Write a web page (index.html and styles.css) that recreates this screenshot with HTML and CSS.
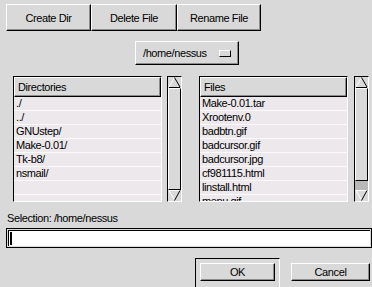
FILE: index.html
```html
<!DOCTYPE html>
<html lang="en">
<head>
  <meta charset="UTF-8" />
  <title>File Browser</title>
  <link rel="stylesheet" href="styles.css">
</head>
<body>
  <div class="toolbar">
    <button class="btn btn-create">Create Dir</button>
    <button class="btn btn-delete">Delete File</button>
    <button class="btn btn-rename">Rename File</button>
  </div>

  <div class="path-row">
    <div class="menubutton">
      <span>/home/nessus</span>
      <span class="indicator"></span>
    </div>
  </div>

  <div class="browser">
    <div class="pane">
      <div class="listbox">
        <div class="list-head">Directories</div>
        <ul>
          <li>./</li>
          <li>../</li>
          <li>GNUstep/</li>
          <li>Make-0.01/</li>
          <li>Tk-b8/</li>
          <li>nsmail/</li>
          <li></li>
          <li></li>
        </ul>
      </div>
      <div class="scroll">
        <svg class="arrow" width="13" height="11" viewBox="0 0 13 11">
          <polygon points="6.5,0.5 12,10 1,10" fill="#d9d9d9"/>
          <line x1="1" y1="10" x2="6.5" y2="0.5" stroke="#fff"/>
          <line x1="6.5" y1="0.5" x2="12" y2="10" stroke="#000"/>
          <line x1="1" y1="10.5" x2="12" y2="10.5" stroke="#000"/>
        </svg>
        <div class="thumb"></div>
        <svg class="arrow" width="13" height="11" viewBox="0 0 13 11">
          <polygon points="1,0.5 12,0.5 6.5,10" fill="#d9d9d9"/>
          <line x1="1" y1="0.5" x2="12" y2="0.5" stroke="#fff"/>
          <line x1="1" y1="0.5" x2="6.5" y2="10" stroke="#fff"/>
          <line x1="12" y1="0.5" x2="6.5" y2="10.5" stroke="#000"/>
        </svg>
      </div>
    </div>

    <div class="pane">
      <div class="listbox">
        <div class="list-head">Files</div>
        <ul>
          <li>Make-0.01.tar</li>
          <li>Xrootenv.0</li>
          <li>badbtn.gif</li>
          <li>badcursor.gif</li>
          <li>badcursor.jpg</li>
          <li>cf981115.html</li>
          <li>linstall.html</li>
          <li>menu.gif</li>
        </ul>
      </div>
      <div class="scroll">
        <svg class="arrow" width="13" height="11" viewBox="0 0 13 11">
          <polygon points="6.5,0.5 12,10 1,10" fill="#d9d9d9"/>
          <line x1="1" y1="10" x2="6.5" y2="0.5" stroke="#fff"/>
          <line x1="6.5" y1="0.5" x2="12" y2="10" stroke="#000"/>
          <line x1="1" y1="10.5" x2="12" y2="10.5" stroke="#000"/>
        </svg>
        <div class="thumb thumb-partial"></div>
        <svg class="arrow" width="13" height="11" viewBox="0 0 13 11">
          <polygon points="1,0.5 12,0.5 6.5,10" fill="#d9d9d9"/>
          <line x1="1" y1="0.5" x2="12" y2="0.5" stroke="#fff"/>
          <line x1="1" y1="0.5" x2="6.5" y2="10" stroke="#fff"/>
          <line x1="12" y1="0.5" x2="6.5" y2="10.5" stroke="#000"/>
        </svg>
      </div>
    </div>
  </div>

  <div class="selection">Selection: /home/nessus</div>
  <div class="entry"><span class="cursor"></span></div>

  <div class="actions">
    <div class="default-ring">
      <button class="btn btn-ok">OK</button>
    </div>
    <button class="btn btn-cancel">Cancel</button>
  </div>
</body>
</html>
```

FILE: styles.css
```css
* {
  box-sizing: border-box;
}

body {
  margin: 0;
  width: 372px;
  height: 287px;
  overflow: hidden;
  background-color: #d9d9d9;
  font-family: 'Liberation Sans', Arial, sans-serif;
  font-size: 11px;
  letter-spacing: -0.4px;
  color: #000;
}

.btn {
  height: 27px;
  padding: 0;
  margin: 0;
  font-family: inherit;
  font-size: 11px;
  letter-spacing: -0.4px;
  color: #000;
  background-color: #d9d9d9;
  border: 1px solid;
  border-color: #fff #000 #000 #fff;
  box-shadow: inset -1px -1px 0 #8c8c8c;
}

.toolbar {
  display: flex;
  padding: 4px 0 0 6px;
}

.btn-create { width: 85px; }
.btn-delete { width: 86px; }
.btn-rename { width: 84px; }

.path-row {
  display: flex;
  justify-content: center;
  margin-top: 10px;
  padding-left: 2px;
}

.menubutton {
  display: flex;
  align-items: center;
  justify-content: space-between;
  width: 104px;
  height: 24px;
  padding: 0 7px 0 7px;
  border: 1px solid;
  border-color: #fff #000 #000 #fff;
  box-shadow: inset -1px -1px 0 #8c8c8c;
}

.indicator {
  width: 12px;
  height: 7px;
  border: 1px solid;
  border-color: #fff #000 #000 #fff;
}

.browser {
  display: flex;
  gap: 17px;
  margin-top: 11px;
  padding-left: 13px;
}

.pane {
  display: flex;
  gap: 5px;
}

.pane + .pane {
  gap: 6px;
}

.listbox {
  width: 149px;
  height: 126px;
  overflow: hidden;
  border: 1px solid;
  border-color: #000 #fff #fff #000;
  background-color: #ece8ec;
}

.list-head {
  height: 20px;
  line-height: 18px;
  padding-left: 3px;
  background-color: #d9d9d9;
  border: 1px solid;
  border-color: #fff #000 #000 #fff;
  box-shadow: inset -1px -1px 0 #8c8c8c;
}

.listbox ul {
  list-style: none;
  margin: 0;
  padding: 0;
}

.listbox li {
  height: 14px;
  line-height: 13px;
  padding-left: 2px;
  border-bottom: 1px solid #fbfbfb;
}

.scroll {
  display: flex;
  flex-direction: column;
  width: 15px;
  height: 126px;
  border: 1px solid;
  border-color: #000 #fff #fff #000;
  background-color: #b8b8b8;
}

.arrow {
  display: block;
  flex: none;
  background-color: #d9d9d9;
}

.thumb {
  flex: 1;
  background-color: #d9d9d9;
  border: 1px solid;
  border-color: #fff #000 #000 #fff;
}

.thumb-partial {
  margin-bottom: 9px;
}

.selection {
  margin: 10px 0 0 7px;
  height: 12px;
  line-height: 12px;
}

.entry {
  display: flex;
  align-items: center;
  width: 366px;
  height: 20px;
  margin: 4px 0 0 6px;
  padding-left: 3px;
  background-color: #fff;
  border: 1px solid #000;
  box-shadow: inset 0 0 0 1px #d9d9d9, inset 2px 2px 0 #000;
}

.cursor {
  width: 2px;
  height: 13px;
  margin-top: 1px;
  background-color: #000;
}

.actions {
  display: flex;
  justify-content: flex-end;
  align-items: flex-start;
  gap: 11px;
  margin-top: 10px;
  padding-right: 2px;
}

.default-ring {
  width: 85px;
  height: 34px;
  padding: 4px;
  border: 1px solid;
  border-color: #000 #fff #fff #000;
}

.btn-ok {
  width: 75px;
  height: 18px;
}

.btn-cancel {
  width: 79px;
  height: 18px;
  margin-top: 5px;
}
```
